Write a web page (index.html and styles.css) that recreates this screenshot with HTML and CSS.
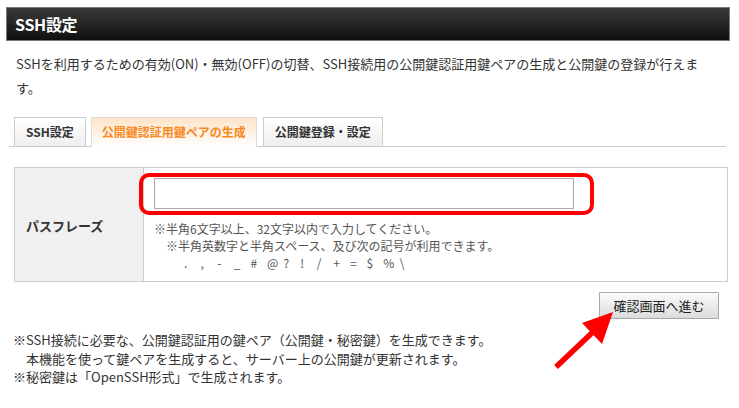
FILE: index.html
```html
<!DOCTYPE html>
<html lang="ja">
<head>
<meta charset="utf-8">
<title>SSH設定</title>
<link rel="stylesheet" href="styles.css">
</head>
<body>
<div class="page">
  <h1 class="title">SSH設定</h1>
  <p class="desc">SSHを利用するための有効(ON)・無効(OFF)の切替、SSH接続用の公開鍵認証用鍵ペアの生成と公開鍵の登録が行えます。</p>
  <div class="tabs">
    <div class="tab">SSH設定</div>
    <div class="tab active">公開鍵認証用鍵ペアの生成</div>
    <div class="tab">公開鍵登録・設定</div>
  </div>
  <div class="form">
    <div class="label">パスフレーズ</div>
    <div class="field">
      <input class="input" type="password">
      <div class="hints">
        <div class="hint">※半角6文字以上、32文字以内で入力してください。</div>
        <div class="hint indent">※半角英数字と半角スペース、及び次の記号が利用できます。</div>
        <div class="hint symbols"><span>.</span><span>,</span><span>-</span><span>_</span><span>#</span><span>@</span><span>?</span><span>!</span><span>/</span><span>+</span><span>=</span><span>$</span><span>%</span><span>\</span></div>
      </div>
    </div>
  </div>
  <div class="actions">
    <button class="btn" type="button">確認画面へ進む</button>
  </div>
  <div class="notes">
    <div>※SSH接続に必要な、公開鍵認証用の鍵ペア（公開鍵・秘密鍵）を生成できます。</div>
    <div class="indent">本機能を使って鍵ペアを生成すると、サーバー上の公開鍵が更新されます。</div>
    <div>※秘密鍵は「OpenSSH形式」で生成されます。</div>
  </div>
</div>
<div class="highlight"></div>
<svg class="arrow" width="739" height="408" viewBox="0 0 739 408">
  <line x1="556" y1="367" x2="594" y2="331" stroke="#ff0000" stroke-width="5.5"/>
  <polygon points="613,312 582,323 602,344" fill="#ff0000"/>
</svg>
</body>
</html>
```

FILE: styles.css
```css
html, body {
  margin: 0;
  padding: 0;
  background: #fff;
}
body {
  font-family: "Noto Sans CJK JP", "Noto Sans", sans-serif;
  color: #333;
  position: relative;
  width: 739px;
  height: 408px;
  overflow: hidden;
}
.page {
  padding: 7px 9px 0 6px;
}
.title {
  margin: 0;
  height: 32px;
  border: 1px solid #7a7a7a;
  background: linear-gradient(#3a3a3a, #101010);
  color: #fff;
  font-size: 16px;
  font-weight: bold;
  line-height: 32px;
  padding-left: 8px;
  letter-spacing: -0.3px;
}
.desc {
  margin: 11px 0 0 10px;
  font-size: 13px;
  line-height: 24px;
  width: 705px;
}
.tabs {
  display: flex;
  margin: 17px 4px 0 3px;
  padding-left: 5px;
  border-bottom: 1px solid #cccccc;
  height: 29px;
}
.tab {
  height: 28px;
  border: 1px solid #cccccc;
  border-bottom: none;
  background: linear-gradient(#ffffff, #eeeeee);
  font-size: 12px;
  font-weight: bold;
  line-height: 28px;
  padding: 0 11px;
  margin-right: 5px;
  color: #333;
  position: relative;
}
.tab.active {
  background: linear-gradient(#ffe4c8, #ffffff);
  color: #f7891f;
  height: 29px;
  font-weight: bold;
  margin-right: 6px;
  padding: 0 10px;
  border-color: #dddddd;
}
.form {
  display: flex;
  margin: 20px 2px 0 8px;
  border: 1px solid #cccccc;
  height: 113px;
}
.label {
  width: 117px;
  flex: none;
  background: #f0f0f0;
  border-right: 1px solid #cccccc;
  font-size: 13px;
  font-weight: bold;
  display: flex;
  align-items: center;
  padding-left: 11px;
  padding-top: 2px;
}
.field {
  flex: 1;
  padding: 10px 10px 0 10px;
}
.input {
  display: block;
  box-sizing: border-box;
  width: 420px;
  height: 31px;
  border: 1px solid #aaaaaa;
  margin: 0;
  background: #fff;
}
.hints {
  margin-top: 12px;
  font-size: 12px;
  color: #555;
  line-height: 16.5px;
}
.hint.indent {
  padding-left: 12px;
}
.hint.symbols {
  display: flex;
  padding-left: 30px;
  padding-top: 1px;
}
.hint.symbols span {
  width: 16.6px;
}
.actions {
  display: flex;
  justify-content: flex-end;
  margin: 10px 11px 0 0;
}
.btn {
  width: 120px;
  height: 27px;
  border: 1px solid #a8a8a8;
  background: linear-gradient(#fafafa, #dcdcdc);
  font-family: "Noto Sans CJK JP", sans-serif;
  font-size: 13px;
  color: #222;
  padding: 0;
  border-radius: 1px;
}
.notes {
  margin: 12px 0 0 7px;
  font-size: 13px;
  line-height: 18.5px;
}
.notes .indent {
  padding-left: 13px;
}
.highlight {
  position: absolute;
  left: 139px;
  top: 173px;
  width: 447px;
  height: 34px;
  border: 4.5px solid #ff0000;
  border-radius: 10px;
}
.arrow {
  position: absolute;
  left: 0;
  top: 0;
}
```
